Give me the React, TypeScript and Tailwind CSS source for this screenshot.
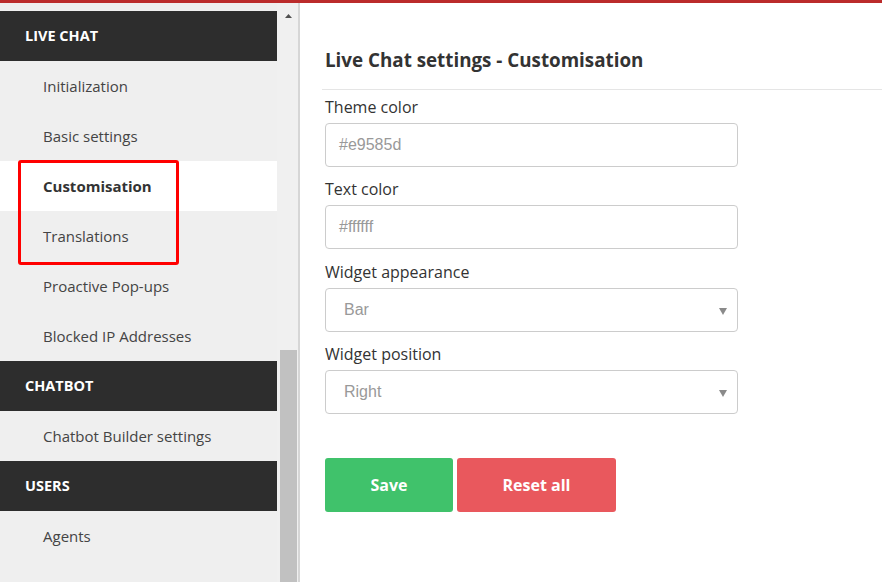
import React from "react";

const font = { fontFamily: '"Open Sans", "Liberation Sans", sans-serif' };

type Row = { label: string; header?: boolean; active?: boolean };

const rows: Row[] = [
  { label: "LIVE CHAT", header: true },
  { label: "Initialization" },
  { label: "Basic settings" },
  { label: "Customisation", active: true },
  { label: "Translations" },
  { label: "Proactive Pop-ups" },
  { label: "Blocked IP Addresses" },
  { label: "CHATBOT", header: true },
  { label: "Chatbot Builder settings" },
  { label: "USERS", header: true },
  { label: "Agents" },
  { label: "Teams" },
];

function Field({ label, value, select, mt }: { label: string; value: string; select?: boolean; mt: string }) {
  return (
    <div className={mt + " flex flex-col"}>
      <label className="text-[16px] leading-[22px] text-[#333] mb-[5px]">{label}</label>
      <div className="relative w-[413px] h-[44px] border border-[#cccccc] rounded-[4px] bg-white flex items-center">
        <span
          className={select ? "pl-[18px] text-[16px] text-[#999]" : "pl-[13px] text-[16px] text-[#999]"}
          style={{ fontFamily: '"Liberation Sans", Arial, sans-serif' }}
        >
          {value}
        </span>
        {select && (
          <svg className="absolute right-[10px] top-[19px]" width="8" height="7" viewBox="0 0 8 7">
            <polygon points="0,0 8,0 4,7" fill="#8a8a8a" />
          </svg>
        )}
      </div>
    </div>
  );
}

export default function App() {
  return (
    <div className="w-[882px] h-[582px] overflow-hidden bg-white flex flex-col relative" style={font}>
      <div className="h-[3px] bg-[#bb2b2b] shrink-0" />
      <div className="flex flex-1 min-h-0">
        {/* sidebar */}
        <div className="w-[277px] bg-[#efefef] pt-[8px] flex flex-col shrink-0">
          {rows.map((r) =>
            r.header ? (
              <div key={r.label} className="h-[50px] shrink-0 bg-[#2d2d2d] flex items-center pl-[25px] text-white font-bold text-[14.5px]">
                {r.label}
              </div>
            ) : (
              <div
                key={r.label}
                className={
                  r.active
                    ? "h-[50px] shrink-0 bg-white flex items-center pl-[43px] text-[#333] font-bold text-[15px]"
                    : "h-[50px] shrink-0 flex items-center pl-[43px] text-[#444] text-[15px]"
                }
              >
                {r.label}
              </div>
            )
          )}
        </div>
        {/* scrollbar */}
        <div className="w-[21px] bg-[#f0f0f0] flex flex-col items-center shrink-0">
          <svg className="mt-[11px] ml-[1px]" width="9" height="5" viewBox="0 0 9 5">
            <polygon points="0,5 9,5 4.5,0" fill="#505050" />
          </svg>
          <div className="mt-[332px] w-[17px] h-[300px] bg-[#c1c1c1] ml-[1px]" />
        </div>
        <div className="w-[2px] bg-[#d6d6d6] shrink-0" />
        {/* content */}
        <div className="flex-1 pl-[25px] flex flex-col">
          <h1 className="mt-[44px] text-[18.8px] leading-[26px] font-bold text-[#333]">Live Chat settings - Customisation</h1>
          <div className="mt-[16px] -ml-[3px] h-px bg-[#e5e5e5]" />
          <div className="mt-[6px] flex flex-col">
            <Field mt="mt-0" label="Theme color" value="#e9585d" />
            <Field mt="mt-[11px]" label="Text color" value="#ffffff" />
            <Field mt="mt-[12px]" label="Widget appearance" value="Bar" select />
            <Field mt="mt-[11px]" label="Widget position" value="Right" select />
          </div>
          <div className="mt-[44px] flex gap-[4px]">
            <button className="w-[128px] h-[54px] rounded-[3px] bg-[#40c26b] text-white font-bold text-[16px]">Save</button>
            <button className="w-[159px] h-[54px] rounded-[3px] bg-[#e9585d] text-white font-bold text-[16px]">Reset all</button>
          </div>
        </div>
      </div>
      {/* highlight box */}
      <div className="absolute left-[18px] top-[160px] w-[161px] h-[105px] border-[3px] border-[#ff0000] rounded-[3px] pointer-events-none" />
    </div>
  );
}
